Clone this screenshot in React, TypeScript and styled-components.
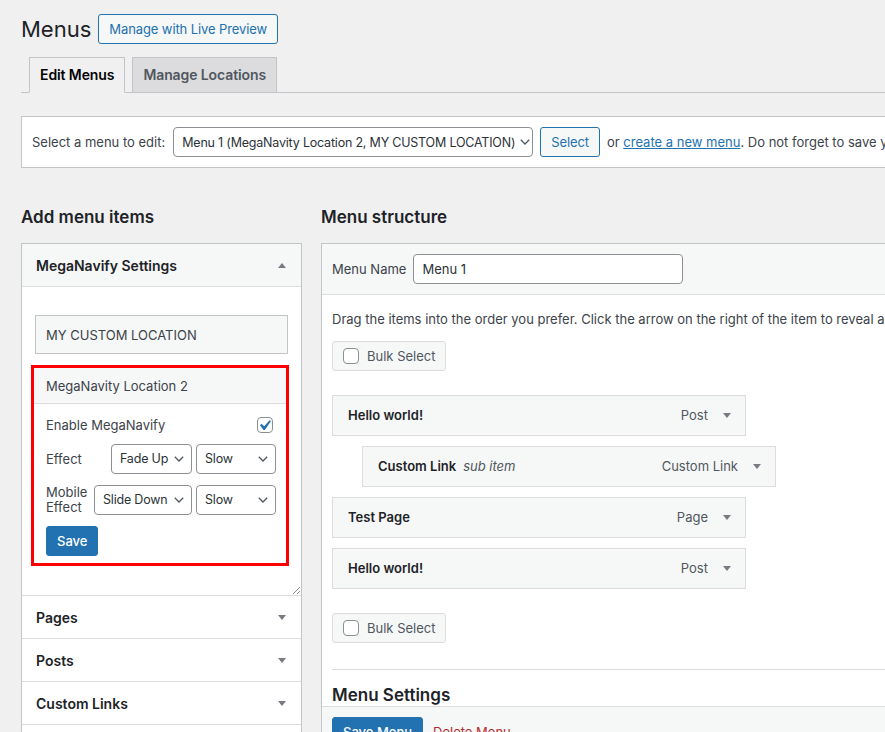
import styled, { createGlobalStyle } from 'styled-components';

const GlobalStyle = createGlobalStyle`
  * { box-sizing: border-box; }
  html, body {
    margin: 0;
    padding: 0;
    background: #f0f0f1;
  }
  body {
    overflow: hidden;
    font-family: Inter, "Noto Sans", sans-serif;
    font-size: 13px;
    color: #3c434a;
  }
`;

function Chevron() {
  return (
    <svg width="12" height="8" viewBox="0 0 12 8" fill="none">
      <path d="M1.8 1.8L6 6l4.2-4.2" stroke="#50575e" strokeWidth="1.3" />
    </svg>
  );
}

function Triangle({ up }: { up?: boolean }) {
  return (
    <svg width="8" height="5" viewBox="0 0 8 5">
      <path d={up ? 'M0 5L4 0l4 5z' : 'M0 0h8L4 5z'} fill="#787c82" />
    </svg>
  );
}

function Check({ checked }: { checked?: boolean }) {
  return (
    <_Checkbox>
      {checked && (
        <svg width="21" height="21" viewBox="0 0 20 20">
          <path
            d="M14.83 4.89l1.34.94-5.81 8.38H9.02L5.78 9.67l1.34-1.25 2.57 2.4z"
            fill="#2271b1"
          />
        </svg>
      )}
    </_Checkbox>
  );
}

function Select({ width, value }: { width: number; value: string }) {
  return (
    <_Select $width={width}>
      <span>{value}</span>
      <Chevron />
    </_Select>
  );
}

const menuItems = [
  { title: 'Hello world!', type: 'Post', depth: 0 },
  { title: 'Custom Link', sub: 'sub item', type: 'Custom Link', depth: 1 },
  { title: 'Test Page', type: 'Page', depth: 0 },
  { title: 'Hello world!', type: 'Post', depth: 0 },
];

export default function App() {
  return (
    <>
      <GlobalStyle />
      <_Page>
        <_Header>
          <_Title>Menus</_Title>
          <_OutlineButton>Manage with Live Preview</_OutlineButton>
        </_Header>

        <_Tabs>
          <_Tab $active>Edit Menus</_Tab>
          <_Tab>Manage Locations</_Tab>
        </_Tabs>

        <_ManageBar>
          <span>Select a menu to edit:</span>
          <_SelectSpacer>
            <Select width={360} value="Menu 1 (MegaNavity Location 2, MY CUSTOM LOCATION)" />
          </_SelectSpacer>
          <_OutlineButton>Select</_OutlineButton>
          <_Hint>
            or <a href="#">create a new menu</a>. Do not forget to save your changes!
          </_Hint>
        </_ManageBar>

        <_Columns>
          <_LeftCol>
            <_Heading>Add menu items</_Heading>
            <_SideBox>
              <_AccordionTitle $open>
                MegaNavify Settings
                <Triangle up />
              </_AccordionTitle>
              <_SideBody>
                <_LocationBox>MY CUSTOM LOCATION</_LocationBox>
                <_Highlight>
                  <_LocationHeader>MegaNavity Location 2</_LocationHeader>
                  <_Fields>
                    <_FieldRow>
                      <span>Enable MegaNavify</span>
                      <_CheckWrap>
                        <Check checked />
                      </_CheckWrap>
                    </_FieldRow>
                    <_FieldRow>
                      <span>Effect</span>
                      <_SelectGroup>
                        <Select width={81} value="Fade Up" />
                        <Select width={80} value="Slow" />
                      </_SelectGroup>
                    </_FieldRow>
                    <_FieldRow>
                      <_TwoLine>
                        Mobile
                        <br />
                        Effect
                      </_TwoLine>
                      <_SelectGroup>
                        <Select width={98} value="Slide Down" />
                        <Select width={80} value="Slow" />
                      </_SelectGroup>
                    </_FieldRow>
                    <_PrimaryButton>Save</_PrimaryButton>
                  </_Fields>
                </_Highlight>
                <_Resize width="8" height="8" viewBox="0 0 8 8">
                  <path d="M8 1L1 8M8 5L5 8" stroke="#8c8f94" strokeWidth="1" />
                </_Resize>
              </_SideBody>
              {['Pages', 'Posts', 'Custom Links', 'Categories'].map((t) => (
                <_AccordionTitle key={t}>
                  {t}
                  <Triangle />
                </_AccordionTitle>
              ))}
            </_SideBox>
          </_LeftCol>

          <_RightCol>
            <_Heading>Menu structure</_Heading>
            <_MenuBox>
              <_MenuHeader>
                <span>Menu Name</span>
                <_NameInput>Menu 1</_NameInput>
              </_MenuHeader>
              <_MenuBody>
                <_Instructions>
                  Drag the items into the order you prefer. Click the arrow on the right of the item
                  to reveal additional configuration options.
                </_Instructions>
                <_BulkButton>
                  <Check />
                  Bulk Select
                </_BulkButton>

                <_ItemList>
                  {menuItems.map((item, i) => (
                    <_MenuItem key={i} $depth={item.depth}>
                      <_ItemTitle>{item.title}</_ItemTitle>
                      {item.sub && <_ItemSub>{item.sub}</_ItemSub>}
                      <_ItemType>{item.type}</_ItemType>
                      <Triangle />
                    </_MenuItem>
                  ))}
                </_ItemList>

                <_BulkButton>
                  <Check />
                  Bulk Select
                </_BulkButton>

                <_Settings>
                  <_SettingsHeading>Menu Settings</_SettingsHeading>
                </_Settings>
              </_MenuBody>
              <_MenuFooter>
                <_PrimaryButton>Save Menu</_PrimaryButton>
                <_DeleteLink>Delete Menu</_DeleteLink>
              </_MenuFooter>
            </_MenuBox>
          </_RightCol>
        </_Columns>
      </_Page>
    </>
  );
}

const _Page = styled.div`
  width: 1200px;
  padding: 14px 0 0 21px;
`;

const _Header = styled.div`
  display: flex;
  align-items: center;
  gap: 7px;
  height: 30px;
`;

const _Title = styled.h1`
  margin: 0;
  font-size: 22px;
  font-weight: 400;
  line-height: 30px;
  color: #1d2327;
`;

const _OutlineButton = styled.button`
  height: 30px;
  padding: 0 10px;
  border: 1px solid #2271b1;
  border-radius: 3px;
  background: #f6f7f7;
  color: #2271b1;
  font-family: inherit;
  font-size: 13px;
  letter-spacing: -0.1px;
  white-space: nowrap;
`;

const _Tabs = styled.div`
  display: flex;
  gap: 7px;
  margin-top: 13px;
  padding-left: 8px;
  border-bottom: 1px solid #c3c4c7;
`;

const _Tab = styled.div<{ $active?: boolean }>`
  padding: 5px 10px;
  margin-bottom: -1px;
  line-height: 24px;
  font-size: 14px;
  font-weight: 600;
  letter-spacing: -0.1px;
  border: 1px solid #c3c4c7;
  border-bottom-color: ${({ $active }) => ($active ? '#f0f0f1' : '#c3c4c7')};
  background: ${({ $active }) => ($active ? '#f0f0f1' : '#dcdcde')};
  color: ${({ $active }) => ($active ? '#000' : '#50575e')};
`;

const _ManageBar = styled.div`
  display: flex;
  align-items: center;
  margin-top: 23px;
  padding: 10px;
  background: #fff;
  border: 1px solid #c3c4c7;
  white-space: nowrap;
`;

const _SelectSpacer = styled.div`
  margin: 0 7px 0 8px;
`;

const _Hint = styled.span`
  margin-left: 7px;
  a {
    color: #2271b1;
  }
`;

const _Select = styled.div<{ $width: number }>`
  display: flex;
  align-items: center;
  justify-content: space-between;
  gap: 4px;
  width: ${({ $width }) => $width}px;
  height: 30px;
  padding: 0 6px 0 8px;
  background: #fff;
  border: 1px solid #8c8f94;
  border-radius: 4px;
  font-size: 12.5px;
  letter-spacing: -0.2px;
  color: #2c3338;
  white-space: nowrap;
  overflow: hidden;
  svg {
    flex-shrink: 0;
  }
`;

const _Columns = styled.div`
  display: flex;
  align-items: flex-start;
  gap: 19px;
  margin-top: 38px;
`;

const _LeftCol = styled.div`
  width: 281px;
  flex-shrink: 0;
`;

const _RightCol = styled.div`
  flex: 1;
`;

const _Heading = styled.h2`
  margin: 0 0 15px;
  font-size: 17px;
  line-height: 22px;
  font-weight: 600;
  color: #1d2327;
`;

const _SideBox = styled.div`
  background: #fff;
  border: 1px solid #c3c4c7;
`;

const _AccordionTitle = styled.div<{ $open?: boolean }>`
  display: flex;
  align-items: center;
  justify-content: space-between;
  height: 43px;
  padding: 0 15px 0 14px;
  border-bottom: 1px solid #dcdcde;
  background: ${({ $open }) => ($open ? '#f6f7f7' : '#fff')};
  font-size: 14px;
  font-weight: 600;
  color: #1d2327;
`;

const _SideBody = styled.div`
  position: relative;
  padding: 28px 13px 29px;
  border-bottom: 1px solid #dcdcde;
`;

const _Resize = styled.svg`
  position: absolute;
  right: 1px;
  bottom: 1px;
`;

const _LocationBox = styled.div`
  display: flex;
  align-items: center;
  height: 39px;
  margin-bottom: 11px;
  padding: 0 10px;
  background: #f6f7f7;
  border: 1px solid #c3c4c7;
`;

const _Highlight = styled.div`
  margin: 0 -1px 0 -4px;
  border: 3px solid #f00;
`;

const _LocationHeader = styled.div`
  display: flex;
  align-items: center;
  height: 36px;
  padding: 0 12px;
  background: #f6f7f7;
  border-bottom: 1px solid #dcdcde;
`;

const _Fields = styled.div`
  display: flex;
  flex-direction: column;
  gap: 11px;
  padding: 13px 10px 7px 12px;
`;

const _FieldRow = styled.div`
  display: flex;
  align-items: center;
  justify-content: space-between;
  line-height: 16px;
`;

const _TwoLine = styled.span`
  line-height: 15px;
`;

const _CheckWrap = styled.div`
  display: flex;
  margin-right: 3px;
`;

const _SelectGroup = styled.div`
  display: flex;
  gap: 4px;
`;

const _Checkbox = styled.span`
  position: relative;
  display: block;
  width: 16px;
  height: 16px;
  border: 1px solid #8c8f94;
  border-radius: 4px;
  background: #fff;
  flex-shrink: 0;
  svg {
    position: absolute;
    left: -4px;
    top: -3px;
  }
`;

const _PrimaryButton = styled.button`
  align-self: flex-start;
  height: 30px;
  padding: 0 10px;
  border: 1px solid #2271b1;
  border-radius: 3px;
  background: #2271b1;
  color: #fff;
  font-family: inherit;
  font-size: 13px;
  font-weight: 500;
`;

const _MenuBox = styled.div`
  background: #fff;
  border: 1px solid #c3c4c7;
`;

const _MenuHeader = styled.div`
  display: flex;
  align-items: center;
  gap: 7px;
  padding: 10px;
  background: #f6f7f7;
  border-bottom: 1px solid #dcdcde;
`;

const _NameInput = styled.div`
  display: flex;
  align-items: center;
  width: 270px;
  height: 30px;
  padding: 0 8px;
  background: #fff;
  border: 1px solid #8c8f94;
  border-radius: 4px;
  font-size: 13px;
  color: #2c3338;
`;

const _MenuBody = styled.div`
  padding: 0 10px;
`;

const _Instructions = styled.p`
  margin: 15px 0 11px;
  line-height: 19.5px;
  white-space: nowrap;
`;

const _BulkButton = styled.div`
  display: inline-flex;
  align-items: center;
  gap: 8px;
  height: 30px;
  padding: 0 10px;
  background: #f6f7f7;
  border: 1px solid #dcdcde;
  border-radius: 3px;
  color: #50575e;
`;

const _ItemList = styled.div`
  display: flex;
  flex-direction: column;
  gap: 10px;
  margin: 24px 0;
`;

const _MenuItem = styled.div<{ $depth: number }>`
  display: flex;
  align-items: center;
  width: 414px;
  height: 41px;
  margin-left: ${({ $depth }) => $depth * 30}px;
  padding: 0 14px 0 15px;
  background: #f6f7f7;
  border: 1px solid #dcdcde;
`;

const _ItemTitle = styled.span`
  font-weight: 600;
  color: #1d2327;
`;

const _ItemSub = styled.span`
  margin-left: 7px;
  font-style: italic;
  color: #50575e;
`;

const _ItemType = styled.span`
  margin: 0 15px 0 auto;
  color: #50575e;
`;

const _Settings = styled.div`
  margin-top: 26px;
  padding-top: 14px;
  border-top: 1px solid #dcdcde;
`;

const _SettingsHeading = styled.h3`
  margin: 0;
  font-size: 17px;
  line-height: 22px;
  font-weight: 600;
  color: #1d2327;
`;

const _MenuFooter = styled.div`
  display: flex;
  align-items: center;
  gap: 10px;
  padding: 10px;
  background: #f6f7f7;
  border-top: 1px solid #dcdcde;
`;

const _DeleteLink = styled.a`
  color: #b32d2e;
`;
